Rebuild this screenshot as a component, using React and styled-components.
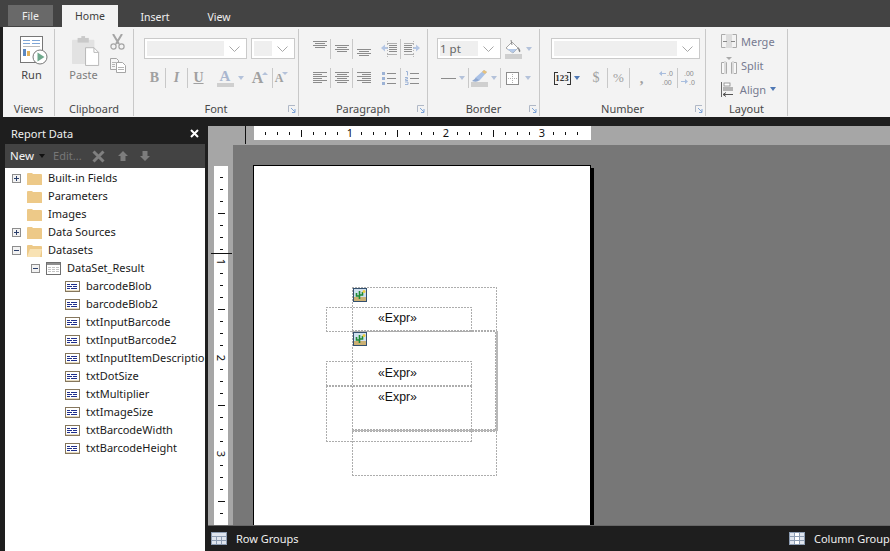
import styled, { createGlobalStyle } from "styled-components";

const GlobalStyle = createGlobalStyle`
  html, body { margin: 0; padding: 0; background: #1e1e1e; }
  * { box-sizing: border-box; }
`;

const UI = `"Noto Sans", "Open Sans", sans-serif`;
const DASH = "#adadad";

const Shell = styled.div`
  width: 890px;
  height: 551px;
  overflow: hidden;
  display: flex;
  flex-direction: column;
  background: #1e1e1e;
  font-family: ${UI};
  font-size: 11px;
`;

const TabBar = styled.div`
  height: 27px;
  background: #434343;
  display: flex;
  align-items: flex-end;
  padding: 0 0 0 8px;
`;

const Tab = styled.div`
  height: ${(p) => (p.$active ? 22 : 21)}px;
  margin-bottom: ${(p) => (p.$file ? 1 : 0)}px;
  width: ${(p) => p.$w}px;
  margin-right: ${(p) => p.$mr || 0}px;
  display: flex;
  align-items: center;
  justify-content: center;
  font-size: 10.5px;
  color: ${(p) => (p.$active ? "#3c3c3c" : "#f0f0f0")};
  background: ${(p) => (p.$active ? "#f3f3f3" : p.$file ? "#696969" : "transparent")};
`;

const Ribbon = styled.div`
  height: 90px;
  margin-left: 3px;
  background: #f3f3f3;
  display: flex;
`;

const Group = styled.div`
  width: ${(p) => p.$w}px;
  margin: 2px 0 1px;
  border-right: 1px solid #c8c8c8;
  display: flex;
  flex-direction: column;
  position: relative;
`;

const GroupBody = styled.div`
  flex: 1;
  padding: ${(p) => (p.$pt === undefined ? 9 : p.$pt)}px 0 0 ${(p) => p.$pl || 0}px;
  display: flex;
  flex-direction: ${(p) => (p.$row ? "row" : "column")};
  gap: 7px;
  min-height: 0;
`;

const GroupLabel = styled.div`
  height: 14px;
  line-height: 14px;
  text-align: center;
  color: #4a4a4a;
  font-size: 11px;
`;

const Launcher = styled.svg`
  position: absolute;
  right: 2px;
  bottom: 3px;
`;

const ToolRow = styled.div`
  height: ${(p) => p.$h}px;
  display: flex;
  align-items: center;
`;

const Cell = styled.div`
  width: ${(p) => p.$w}px;
  margin-left: ${(p) => p.$ml || 0}px;
  height: 100%;
  display: flex;
  align-items: center;
  justify-content: center;
  color: #9a9a9a;
  flex: none;
`;

const Sep = styled.div`
  width: 1px;
  height: 20px;
  background: #c8c8c8;
  flex: none;
`;

const Caret = styled.div`
  width: 0;
  height: 0;
  flex: none;
  margin-left: ${(p) => p.$ml || 0}px;
  border-left: 3.5px solid transparent;
  border-right: 3.5px solid transparent;
  border-top: 4px solid ${(p) => (p.$on ? "#4f78b4" : "#b4c2da")};
`;

const SizeCaret = styled.div`
  width: 0;
  height: 0;
  flex: none;
  margin: -9px 0 0 -1px;
  border-left: 3px solid transparent;
  border-right: 3px solid transparent;
  ${(p) => (p.$up ? "border-bottom" : "border-top")}: 3px solid #b4c2da;
`;

const NewCaret = styled(Caret)`
  border-top-color: #111;
`;

const Combo = styled.div`
  width: ${(p) => p.$w}px;
  margin-left: ${(p) => p.$ml || 0}px;
  height: 21px;
  background: #fff;
  border: 1px solid #cacaca;
  padding: 2px;
  display: flex;
  align-items: stretch;
  flex: none;
`;

const ComboField = styled.div`
  flex: 1;
  background: #efefef;
  font-size: 11.5px;
  line-height: 15px;
  color: #666;
`;

const ComboArrow = styled.div`
  width: ${(p) => p.$w || 20}px;
  display: flex;
  align-items: center;
  justify-content: center;
`;

const BigTool = styled.div`
  width: ${(p) => p.$w}px;
  display: flex;
  flex-direction: column;
  align-items: center;
  gap: ${(p) => p.$gap}px;
  line-height: 15px;
  color: ${(p) => (p.$off ? "#7d7d7d" : "#444")};
  flex: none;
`;

const BigLabel = styled.span`
  margin-right: 5px;
`;

const SideStack = styled.div`
  display: flex;
  flex-direction: column;
  gap: 8px;
  margin-left: 3px;
  margin-top: -2px;
`;

const Glyph = styled.span`
  font-family: "Liberation Serif", serif;
  font-weight: ${(p) => (p.$bold ? 700 : 400)};
  font-style: ${(p) => (p.$it ? "italic" : "normal")};
  font-size: ${(p) => p.$size || 14}px;
  text-decoration: ${(p) => (p.$under ? "underline" : "none")};
  color: #a0a0a0;
`;

const ColorA = styled.span`
  display: inline-block;
  width: 17px;
  text-align: center;
  font-family: "Liberation Serif", serif;
  font-weight: 700;
  font-size: 15px;
  line-height: 13px;
  color: #a9b6cf;
  border-bottom: 4px solid #cfcfcf;
`;

const NumBadge = styled.span`
  width: 17px;
  height: 13px;
  border-left: 1px solid #333;
  border-right: 1px solid #333;
  background:
    linear-gradient(#333, #333) left top / 3px 1px no-repeat,
    linear-gradient(#333, #333) right top / 3px 1px no-repeat,
    linear-gradient(#333, #333) left bottom / 3px 1px no-repeat,
    linear-gradient(#333, #333) right bottom / 3px 1px no-repeat;
  font-family: "Liberation Serif", serif;
  font-weight: 700;
  font-size: 9px;
  line-height: 13px;
  text-align: center;
  color: #333;
`;

const LayoutStack = styled.div`
  display: flex;
  flex-direction: column;
  padding: 0 0 0 15px;
`;

const LayoutItem = styled.div`
  height: 24px;
  display: flex;
  align-items: center;
  gap: 4px;
  color: #767a90;
  font-size: 11px;
`;

const Main = styled.div`
  flex: 1;
  min-height: 0;
  display: flex;
  margin-top: 8px;
`;

const DataPanel = styled.div`
  width: 205px;
  padding-left: 5px;
  display: flex;
  flex-direction: column;
  flex: none;
`;

const PanelTitle = styled.div`
  height: 19px;
  margin-left: -5px;
  padding: 0 6px 3px 11px;
  display: flex;
  align-items: center;
  justify-content: space-between;
  color: #f0f0f0;
  font-size: 11px;
`;

const PanelToolbar = styled.div`
  height: 24px;
  background: #434343;
  display: flex;
  align-items: center;
  padding-left: 5px;
`;

const NewButton = styled.span`
  color: #f4f4f4;
  font-size: 11.5px;
  margin-top: -2px;
`;

const EditButton = styled.span`
  color: #777;
  font-size: 11px;
  margin: -2px 10px 0 8px;
`;

const TreeBox = styled.div`
  flex: 1;
  background: #fff;
  overflow: hidden;
  padding-top: 1px;
`;

const TreeRow = styled.div`
  height: 18px;
  display: flex;
  align-items: center;
  padding-left: ${(p) => p.$indent}px;
  white-space: nowrap;
  color: #1a1a1a;
  font-size: 11px;
`;

const TreeLabel = styled.span`
  margin-top: -2px;
`;

const Expander = styled.svg`
  flex: none;
  margin-right: 6px;
`;

const ExpanderGap = styled.div`
  width: 15px;
  flex: none;
`;

const RowIcon = styled.svg`
  flex: none;
  margin-right: 6px;
`;

const Designer = styled.div`
  flex: 1;
  min-width: 0;
  margin-left: 3px;
  margin-top: 1px;
  display: flex;
  flex-direction: column;
  position: relative;
`;

const TopStrip = styled.div`
  height: 19px;
  background: #a6a6a6;
  padding-left: 46px;
  flex: none;
`;

const TopRuler = styled.div`
  width: 337px;
  height: 14px;
  background: #fff;
  display: flex;
`;

const HCell = styled.div`
  width: 12px;
  height: 14px;
  display: flex;
  align-items: center;
  justify-content: flex-end;
  font-size: 11px;
  color: #111;
  flex: none;
`;

const HTick = styled.div`
  width: 1px;
  height: ${(p) => (p.$long ? 7 : 3)}px;
  background: #111;
`;

const Digit = styled.span`
  width: 8px;
  margin-right: -4px;
  text-align: center;
  line-height: 14px;
`;

const Marker = styled.div`
  position: absolute;
  background: #111;
  left: ${(p) => p.$x}px;
  top: ${(p) => p.$y}px;
  width: ${(p) => p.$w}px;
  height: ${(p) => p.$h}px;
`;

const WorkRow = styled.div`
  flex: 1;
  min-height: 0;
  display: flex;
`;

const SideStrip = styled.div`
  width: 25px;
  background: #a6a6a6;
  padding: 21px 5px 0 6px;
  flex: none;
  overflow: hidden;
`;

const SideRuler = styled.div`
  width: 14px;
  height: 100%;
  background: #fff;
`;

const VCell = styled.div`
  height: 12px;
  display: flex;
  align-items: flex-end;
  justify-content: center;
  font-size: 11px;
  color: #111;
`;

const VTick = styled.div`
  height: 1px;
  width: ${(p) => (p.$long ? 7 : 3)}px;
  background: #111;
`;

const VDigit = styled.span`
  transform: rotate(90deg);
  line-height: 12px;
  margin-bottom: -6px;
`;

const Canvas = styled.div`
  flex: 1;
  min-width: 0;
  background: #777;
  padding: 20px 0 0 20px;
  overflow: hidden;
`;

const Page = styled.div`
  width: 338px;
  height: 500px;
  background: #fff;
  border: 1px solid #000;
  border-bottom: 0;
  box-shadow: 3px 3px 0 #000;
  position: relative;
`;

const ReportBox = styled.div`
  position: absolute;
  left: ${(p) => p.$x - 254}px;
  top: ${(p) => p.$y - 166}px;
  width: ${(p) => p.$w}px;
  height: ${(p) => p.$h}px;
  background:
    repeating-linear-gradient(90deg, ${DASH} 0 2px, transparent 2px 3px) left top / 100% 1px no-repeat,
    repeating-linear-gradient(90deg, ${DASH} 0 2px, transparent 2px 3px) left bottom / 100% 1px no-repeat,
    repeating-linear-gradient(0deg, ${DASH} 0 2px, transparent 2px 3px) left top / 1px 100% no-repeat,
    repeating-linear-gradient(0deg, ${DASH} 0 2px, transparent 2px 3px) right top / 1px 100% no-repeat;
`;

const SolidBox = styled(ReportBox)`
  border-right: 2px solid #b8b8b8;
  border-bottom: 1px solid #b8b8b8;
`;

const ExprText = styled.div`
  position: absolute;
  left: ${(p) => p.$x - 254}px;
  top: ${(p) => p.$y - 166 - 8}px;
  line-height: 16px;
  font-family: "Liberation Sans", Arial, sans-serif;
  font-size: 12.3px;
  color: #111;
`;

const PicIcon = styled.svg`
  position: absolute;
  left: ${(p) => p.$x - 254}px;
  top: ${(p) => p.$y - 166}px;
`;

const BottomBar = styled.div`
  height: 26px;
  flex: none;
  background: #1e1e1e;
  border-top: 1px solid #666;
  display: flex;
  align-items: center;
  justify-content: space-between;
  padding-left: 3px;
  white-space: nowrap;
  color: #f0f0f0;
  font-size: 11px;
`;

const GroupTag = styled.div`
  display: flex;
  align-items: center;
  gap: 9px;
  width: ${(p) => p.$w}px;
  flex: none;

  svg {
    flex: none;
  }
`;

function Run() {
  return (
    <svg width="28" height="29" viewBox="0 0 28 29">
      <rect x=".5" y=".5" width="22" height="26" fill="#fff" stroke="#777" />
      <path d="M3 4.500h7M12 4.500h8M3 7.500h7M12 7.500h8" stroke="#7fa6d6" />
      <path d="M3 10.500h17" stroke="#bbb" />
      <rect x="3" y="13" width="3" height="7" fill="#5b87c0" />
      <rect x="7" y="15" width="3" height="5" fill="#e2b25c" />
      <circle cx="20" cy="21" r="7" fill="#fff" stroke="#777" />
      <path d="M17.500 16.500v9l7-4.500z" fill="#6ea88c" />
    </svg>
  );
}

function Paste() {
  return (
    <svg width="28" height="30" viewBox="0 0 30 32">
      <rect x="0" y="4" width="24" height="26" rx="1" fill="#e2e2e2" />
      <rect x="6" y="2" width="12" height="5" fill="#c9c9c9" />
      <rect x="10" y="0" width="4" height="3" fill="#c9c9c9" />
      <path d="M14.500 12.500h9l5 5v14h-14z" fill="#fff" stroke="#b5b5b5" />
      <path d="M23.500 12.500v5h5" fill="none" stroke="#b5b5b5" />
    </svg>
  );
}

function Scissors() {
  return (
    <svg width="15" height="16" viewBox="0 0 15 16">
      <path d="M3 0l6 10M12 0L6 10" stroke="#a5a5a5" strokeWidth="2" fill="none" />
      <circle cx="3.500" cy="12.500" r="2.600" fill="none" stroke="#a5a5a5" strokeWidth="1.200" />
      <circle cx="11.500" cy="12.500" r="2.600" fill="none" stroke="#a5a5a5" strokeWidth="1.200" />
    </svg>
  );
}

function CopyIcon() {
  return (
    <svg width="16" height="15" viewBox="0 0 16 15">
      <path d="M.5.5h6l2 2v9h-8z" fill="#f6f6f6" stroke="#a5a5a5" />
      <path d="M6.500 4.500h6l3 3v7h-9z" fill="#fff" stroke="#a5a5a5" />
      <path d="M2 4.500h4M2 6.500h3M2 8.500h3M8 9.500h6M8 11.500h6" stroke="#b5b5b5" />
    </svg>
  );
}

function Chevron() {
  return (
    <svg width="11" height="6" viewBox="0 0 11 6">
      <path d="M.5.5l5 5 5-5" fill="none" stroke="#a8a8a8" />
    </svg>
  );
}

function Launch() {
  return (
    <Launcher width="8" height="8" viewBox="0 0 8 8">
      <path d="M.5 7V.5H7" fill="none" stroke="#b0b8c6" />
      <path d="M3 3l4 4M7 4v3.500H4" fill="none" stroke="#7fa5d8" />
    </Launcher>
  );
}

// rows: [x, width] pairs of the text lines in an alignment icon
function Lines({ top = 0, rows }) {
  return (
    <svg width="14" height="16" viewBox="0 0 14 16">
      {rows.map(([x, w], i) => (
        <rect key={i} x={x} y={top + i * 2} width={w} height="1" fill="#8c8c8c" />
      ))}
    </svg>
  );
}

function Indent({ flip }) {
  return (
    <svg width="16" height="16" viewBox="0 0 16 16" style={flip ? { transform: "scaleX(-1)" } : undefined}>
      <path d="M6 2.500h10M6 13.500h10" stroke="#b0b0b0" />
      <path d="M8 4h8v1H8zM8 6h8v1H8zM8 8h8v1H8zM8 10h8v1H8z" fill="#8c8c8c" />
      <path d="M0 7l4-3.500V6h3v2H4v2.500z" fill="#b4c6e4" />
      <path d="M6.500 0v16" stroke="#b8b8b8" strokeDasharray="1 2" />
    </svg>
  );
}

function ListIcon({ numbered }) {
  return (
    <svg width="14" height="14" viewBox="0 0 14 14">
      <path d="M5 2.500h9M5 7.500h9M5 12.500h9" stroke="#8c8c8c" />
      {numbered ? (
        <path d="M1 .5h1.500v4M0 6.500h2.500v1.500H.5v1.500h2.500M0 11h3v2.500H0" fill="none" stroke="#9db3d6" />
      ) : (
        <path d="M0 1h3v3H0zM0 6h3v3H0zM0 11h3v3H0z" fill="#9db3d6" />
      )}
    </svg>
  );
}

function Bucket() {
  return (
    <svg width="17" height="20" viewBox="0 0 17 20">
      <path d="M1 9l6-6 6 6-5 5z" fill="#fff" stroke="#a5a5a5" />
      <path d="M6 1l1 5" stroke="#888" />
      <path d="M13 8c2 2 3 4 2 5s-2-3-2-5z" fill="#7d7d7d" />
      <path d="M2 10h10l-4 4z" fill="#b4c9e8" />
      <rect x="0" y="15" width="17" height="5" fill="#cfcfcf" />
    </svg>
  );
}

function Pen() {
  return (
    <svg width="17" height="18" viewBox="0 0 17 18">
      <path d="M4 9L13 1l3 2-8 9z" fill="#a9c1e6" />
      <path d="M13 1l3 2-2 2-3-2z" fill="#e9c27a" />
      <path d="M1 12c2-1 3-3 4-3l3 2c-1 2-4 2-7 1z" fill="#8fa8d0" />
      <rect x="0" y="13" width="17" height="5" fill="#cfcfcf" />
    </svg>
  );
}

function BorderBox() {
  return (
    <svg width="13" height="13" viewBox="0 0 13 13">
      <rect x=".5" y=".5" width="12" height="12" fill="#fff" stroke="#8c8c8c" />
      <path d="M6.500 2v9M2 6.500h9" stroke="#b0b0b0" strokeDasharray="1 1" />
    </svg>
  );
}

function Decimal({ more }) {
  return (
    <svg width="17" height="16" viewBox="0 0 17 16" fontFamily="Liberation Sans, sans-serif" fontSize="7" fill="#8a8a8a">
      <text x={more ? 3 : 8} y="6">{more ? ".00" : ".0"}</text>
      <text x={more ? 8 : 3} y="14.500">{more ? ".0" : ".00"}</text>
      <path d={more ? "M0 11h4V9l3 2.500-3 2.500v-2H0z" : "M7 3H3V1L0 3.500 3 6V4h4z"} fill="#a9bede" />
    </svg>
  );
}

function Merge() {
  return (
    <svg width="16" height="14" viewBox="0 0 16 14">
      <path d="M4.500.5H.5v13h4M11.500.5h4v13h-4" fill="none" stroke="#aaa" />
      <rect x="5" y="0" width="6" height="14" fill="#dcdcdc" />
      <path d="M2 7.500h4M14 7.500h-4" stroke="#888" />
    </svg>
  );
}

function Split() {
  return (
    <svg width="16" height="17" viewBox="0 0 16 17">
      <path d="M5 0h6l-3 3z" fill="#aaa" />
      <path d="M.5 5.500h5v11h-5zM10.500 5.500h5v11h-5z" fill="#f8f8f8" stroke="#aaa" />
      <rect x="3" y="4" width="2" height="13" fill="#dcdcdc" />
      <rect x="11" y="4" width="2" height="13" fill="#dcdcdc" />
    </svg>
  );
}

function AlignLeft() {
  return (
    <svg width="12" height="15" viewBox="0 0 12 15">
      <path d="M.5 0v15" stroke="#666" />
      <rect x="3" y="1" width="6" height="3" fill="#fff" stroke="#888" strokeWidth=".8" />
      <rect x="2" y="5" width="10" height="4" fill="#b5b5b5" />
      <path d="M2 12.500h10M2 12.500l3-2M2 12.500l3 2" stroke="#555" fill="none" />
    </svg>
  );
}

function Folder({ open }) {
  return (
    <RowIcon width="15" height="13" viewBox="0 0 15 13">
      <path d="M0 2a1 1 0 0 1 1-1h4l1 1h8a1 1 0 0 1 1 1v10H0z" fill="#edc988" />
      {open && <path d="M0 13l3-8h12l-2 8z" fill="#f8e2b4" />}
    </RowIcon>
  );
}

function Toggle({ open }) {
  return (
    <Expander width="9" height="9" viewBox="0 0 9 9">
      <rect x=".5" y=".5" width="8" height="8" fill="#f2f2f2" stroke="#8d8d8d" />
      <path d={open ? "M2 4.500h5" : "M2 4.500h5M4.500 2v5"} stroke="#2b3f6b" />
    </Expander>
  );
}

function TableIcon() {
  return (
    <RowIcon width="15" height="13" viewBox="0 0 15 13">
      <rect x=".5" y=".5" width="14" height="12" fill="#fff" stroke="#707070" />
      <rect x="1" y="1" width="13" height="2" fill="#8f8f8f" />
      <path d="M2 5.500h3M6 5.500h3M10 5.500h3M2 7.500h3M6 7.500h3M10 7.500h3M2 9.500h3M6 9.500h3M10 9.500h3" stroke="#c4c4c4" />
    </RowIcon>
  );
}

function FieldIcon() {
  return (
    <RowIcon width="15" height="11" viewBox="0 0 15 11">
      <rect x=".5" y=".5" width="14" height="10" fill="#fff" stroke="#85765c" />
      <path d="M1 9.500h13" stroke="#e4d9bf" />
      <path d="M2 3.500h3M6 3.500h6M2 5.500h5M8 5.500h4M2 7.500h3M6 7.500h6" stroke="#1f2f8c" />
    </RowIcon>
  );
}

function GridIcon() {
  return (
    <svg width="16" height="13" viewBox="0 0 16 13">
      <rect width="16" height="13" fill="#8d9db3" />
      <path d="M1 1h14v3H1zM1 5h4v3H1zM6 5h4v3H6zM11 5h4v3h-4zM1 9h4v3H1zM6 9h4v3H6zM11 9h4v3h-4z" fill="#dfe5ee" />
    </svg>
  );
}

function ColumnGridIcon() {
  return (
    <svg width="16" height="13" viewBox="0 0 16 13">
      <rect width="16" height="13" fill="#8d9db3" />
      <path d="M1 1h4v3H1zM11 1h4v3h-4zM1 5h4v3H1zM11 5h4v3h-4zM1 9h4v3H1zM11 9h4v3h-4z" fill="#dfe5ee" />
      <path d="M6 1h4v3H6zM6 5h4v3H6zM6 9h4v3H6z" fill="#fff" />
    </svg>
  );
}

function Picture({ x, y }) {
  return (
    <PicIcon $x={x} $y={y} width="14" height="14" viewBox="0 0 14 14">
      <rect x=".5" y=".5" width="13" height="13" fill="#cfe0ee" stroke="#34506e" />
      <rect x="1" y="9" width="12" height="4" fill="#cbb074" />
      <path d="M6.500 3v8M3.500 5v3h3M9.500 4v3h-3" fill="none" stroke="#1e8a34" strokeWidth="1.600" />
      <circle cx="11" cy="3.500" r="1.500" fill="#efcb3c" />
    </PicIcon>
  );
}

const topRows = [[0, 14], [2, 10], [0, 14], [2, 10]];
const leftRows = [[0, 14], [0, 9], [0, 14], [0, 9], [0, 14], [0, 9]];
const centerRows = [[0, 14], [2, 10], [0, 14], [2, 10], [0, 14], [2, 10]];
const rightRows = [[0, 14], [5, 9], [0, 14], [5, 9], [0, 14], [5, 9]];

const fields = [
  "barcodeBlob",
  "barcodeBlob2",
  "txtInputBarcode",
  "txtInputBarcode2",
  "txtInputItemDescription",
  "txtDotSize",
  "txtMultiplier",
  "txtImageSize",
  "txtBarcodeWidth",
  "txtBarcodeHeight",
];

const rulerTicks = Array.from({ length: 27 }, (_, i) => i + 1);
const sideTicks = Array.from({ length: 30 }, (_, i) => i + 1);

export default function App() {
  return (
    <Shell>
      <GlobalStyle />
      <TabBar>
        <Tab $file $w={45} $mr={9}>File</Tab>
        <Tab $active $w={56} $mr={5}>Home</Tab>
        <Tab $w={64} $mr={10}>Insert</Tab>
        <Tab $w={44}>View</Tab>
      </TabBar>

      <Ribbon>
        <Group $w={52}>
          <GroupBody $row $pl={17} $pt={7}>
            <BigTool $w={28} $gap={2}>
              <Run />
              <BigLabel>Run</BigLabel>
            </BigTool>
          </GroupBody>
          <GroupLabel>Views</GroupLabel>
        </Group>

        <Group $w={79}>
          <GroupBody $row $pl={17} $pt={7}>
            <BigTool $w={28} $off $gap={1}>
              <Paste />
              <BigLabel>Paste</BigLabel>
            </BigTool>
            <SideStack>
              <Scissors />
              <CopyIcon />
            </SideStack>
          </GroupBody>
          <GroupLabel>Clipboard</GroupLabel>
        </Group>

        <Group $w={165}>
          <GroupBody $pl={10}>
            <ToolRow $h={21}>
              <Combo $w={103}>
                <ComboField />
                <ComboArrow><Chevron /></ComboArrow>
              </Combo>
              <Combo $w={44} $ml={4}>
                <ComboField />
                <ComboArrow><Chevron /></ComboArrow>
              </Combo>
            </ToolRow>
            <ToolRow $h={24}>
              <Cell $w={21}><Glyph $bold>B</Glyph></Cell>
              <Sep />
              <Cell $w={21}><Glyph $bold $it>I</Glyph></Cell>
              <Sep />
              <Cell $w={21}><Glyph $bold $under>U</Glyph></Cell>
              <Cell $w={26} $ml={3}><ColorA>A</ColorA></Cell>
              <Caret />
              <Cell $w={24} $ml={4}><Glyph $bold $size={16}>A</Glyph><SizeCaret $up /></Cell>
              <Sep />
              <Cell $w={17}><Glyph $bold $size={12}>A</Glyph><SizeCaret /></Cell>
            </ToolRow>
          </GroupBody>
          <GroupLabel>Font</GroupLabel>
          <Launch />
        </Group>

        <Group $w={129}>
          <GroupBody $pl={10}>
            <ToolRow $h={21}>
              <Cell $w={21}><Lines top={0} rows={topRows} /></Cell>
              <Sep />
              <Cell $w={21}><Lines top={4} rows={topRows} /></Cell>
              <Sep />
              <Cell $w={21}><Lines top={8} rows={topRows} /></Cell>
              <Cell $w={22} $ml={4}><Indent /></Cell>
              <Sep />
              <Cell $w={22}><Indent flip /></Cell>
            </ToolRow>
            <ToolRow $h={24}>
              <Cell $w={21}><Lines top={2} rows={leftRows} /></Cell>
              <Sep />
              <Cell $w={21}><Lines top={2} rows={centerRows} /></Cell>
              <Sep />
              <Cell $w={21}><Lines top={2} rows={rightRows} /></Cell>
              <Cell $w={22} $ml={4}><ListIcon /></Cell>
              <Sep />
              <Cell $w={22}><ListIcon numbered /></Cell>
            </ToolRow>
          </GroupBody>
          <GroupLabel>Paragraph</GroupLabel>
          <Launch />
        </Group>

        <Group $w={112}>
          <GroupBody $pl={9}>
            <ToolRow $h={21}>
              <Combo $w={64}>
                <ComboField>1 pt</ComboField>
                <ComboArrow><Chevron /></ComboArrow>
              </Combo>
              <Cell $w={17} $ml={4}><Bucket /></Cell>
              <Caret $ml={4} />
            </ToolRow>
            <ToolRow $h={24}>
              <Cell $w={18} $ml={2}><svg width="15" height="1"><rect width="15" height="1" fill="#8c8c8c" /></svg></Cell>
              <Caret $ml={2} />
              <Cell $w={3} />
              <Sep />
              <Cell $w={20}><Pen /></Cell>
              <Caret $ml={2} />
              <Cell $w={3} />
              <Sep />
              <Cell $w={20} $ml={1}><BorderBox /></Cell>
              <Caret $ml={3} />
            </ToolRow>
          </GroupBody>
          <GroupLabel>Border</GroupLabel>
          <Launch />
        </Group>

        <Group $w={166}>
          <GroupBody $pl={11}>
            <ToolRow $h={21}>
              <Combo $w={149}>
                <ComboField />
                <ComboArrow><Chevron /></ComboArrow>
              </Combo>
            </ToolRow>
            <ToolRow $h={24}>
              <Cell $w={22}><NumBadge>123</NumBadge></Cell>
              <Caret $on $ml={1} />
              <Cell $w={22} $ml={5}><Glyph $size={14}>$</Glyph></Cell>
              <Sep />
              <Cell $w={21}><Glyph $size={13}>%</Glyph></Cell>
              <Sep />
              <Cell $w={23}><Glyph $bold $size={15}>,</Glyph></Cell>
              <Cell $w={20} $ml={4}><Decimal /></Cell>
              <Sep />
              <Cell $w={22}><Decimal more /></Cell>
            </ToolRow>
          </GroupBody>
          <GroupLabel>Number</GroupLabel>
          <Launch />
        </Group>

        <Group $w={82}>
          <GroupBody $row $pt={0}>
            <LayoutStack>
              <LayoutItem><Merge />Merge</LayoutItem>
              <LayoutItem><Split />Split</LayoutItem>
              <LayoutItem>
                <AlignLeft />
                &nbsp;Align
                <Caret $on />
              </LayoutItem>
            </LayoutStack>
          </GroupBody>
          <GroupLabel>Layout</GroupLabel>
        </Group>
      </Ribbon>

      <Main>
        <DataPanel>
          <PanelTitle>
            Report Data
            <svg width="9" height="9" viewBox="0 0 9 9">
              <path d="M1 1l7 7M8 1L1 8" stroke="#fff" strokeWidth="2" />
            </svg>
          </PanelTitle>
          <PanelToolbar>
            <NewButton>New</NewButton>
            <NewCaret $ml={5} />
            <EditButton>Edit...</EditButton>
            <svg width="13" height="13" viewBox="0 0 13 13">
              <path d="M1.500 1.500l10 10M11.500 1.500l-10 10" stroke="#808080" strokeWidth="3" />
            </svg>
            <svg width="10" height="10" viewBox="0 0 10 10" style={{ marginLeft: 13 }}>
              <path d="M5 0l5 5H7.500v5h-5V5H0z" fill="#7d7d7d" />
            </svg>
            <svg width="10" height="10" viewBox="0 0 10 10" style={{ marginLeft: 12 }}>
              <path d="M5 10l5-5H7.500V0h-5v5H0z" fill="#7d7d7d" />
            </svg>
          </PanelToolbar>
          <TreeBox>
            <TreeRow $indent={7}><Toggle /><Folder /><TreeLabel>Built-in Fields</TreeLabel></TreeRow>
            <TreeRow $indent={7}><ExpanderGap /><Folder /><TreeLabel>Parameters</TreeLabel></TreeRow>
            <TreeRow $indent={7}><ExpanderGap /><Folder /><TreeLabel>Images</TreeLabel></TreeRow>
            <TreeRow $indent={7}><Toggle /><Folder /><TreeLabel>Data Sources</TreeLabel></TreeRow>
            <TreeRow $indent={7}><Toggle open /><Folder open /><TreeLabel>Datasets</TreeLabel></TreeRow>
            <TreeRow $indent={26}><Toggle open /><TableIcon /><TreeLabel>DataSet_Result</TreeLabel></TreeRow>
            {fields.map((name) => (
              <TreeRow key={name} $indent={60}><FieldIcon /><TreeLabel>{name}</TreeLabel></TreeRow>
            ))}
          </TreeBox>
        </DataPanel>

        <Designer>
          <TopStrip>
            <TopRuler>
              {rulerTicks.map((n) => (
                <HCell key={n}>
                  {n % 8 === 0 ? <Digit>{n / 8}</Digit> : <HTick $long={n % 8 === 4} />}
                </HCell>
              ))}
            </TopRuler>
          </TopStrip>
          <Marker $x={37} $y={0} $w={1} $h={18} />
          <Marker $x={3} $y={127} $w={21} $h={1} />
          <WorkRow>
            <SideStrip>
              <SideRuler>
                {sideTicks.map((n) => (
                  <VCell key={n}>
                    {n % 8 === 0 ? <VDigit>{n / 8}</VDigit> : <VTick $long={n % 8 === 4} />}
                  </VCell>
                ))}
              </SideRuler>
            </SideStrip>
            <Canvas>
              <Page>
                <ReportBox $x={352} $y={287} $w={145} $h={44} />
                <SolidBox $x={352} $y={331} $w={146} $h={100} />
                <ReportBox $x={352} $y={431} $w={145} $h={45} />
                <ReportBox $x={326} $y={307} $w={146} $h={25} />
                <ReportBox $x={326} $y={361} $w={146} $h={25} />
                <ReportBox $x={326} $y={386} $w={146} $h={56} />
                <Picture x={353} y={288} />
                <Picture x={353} y={332} />
                <ExprText $x={378} $y={318}>«Expr»</ExprText>
                <ExprText $x={378} $y={373}>«Expr»</ExprText>
                <ExprText $x={378} $y={397}>«Expr»</ExprText>
              </Page>
            </Canvas>
          </WorkRow>
          <BottomBar>
            <GroupTag>
              <GridIcon />
              Row Groups
            </GroupTag>
            <GroupTag $w={101}>
              <ColumnGridIcon />
              Column Groups
            </GroupTag>
          </BottomBar>
        </Designer>
      </Main>
    </Shell>
  );
}
